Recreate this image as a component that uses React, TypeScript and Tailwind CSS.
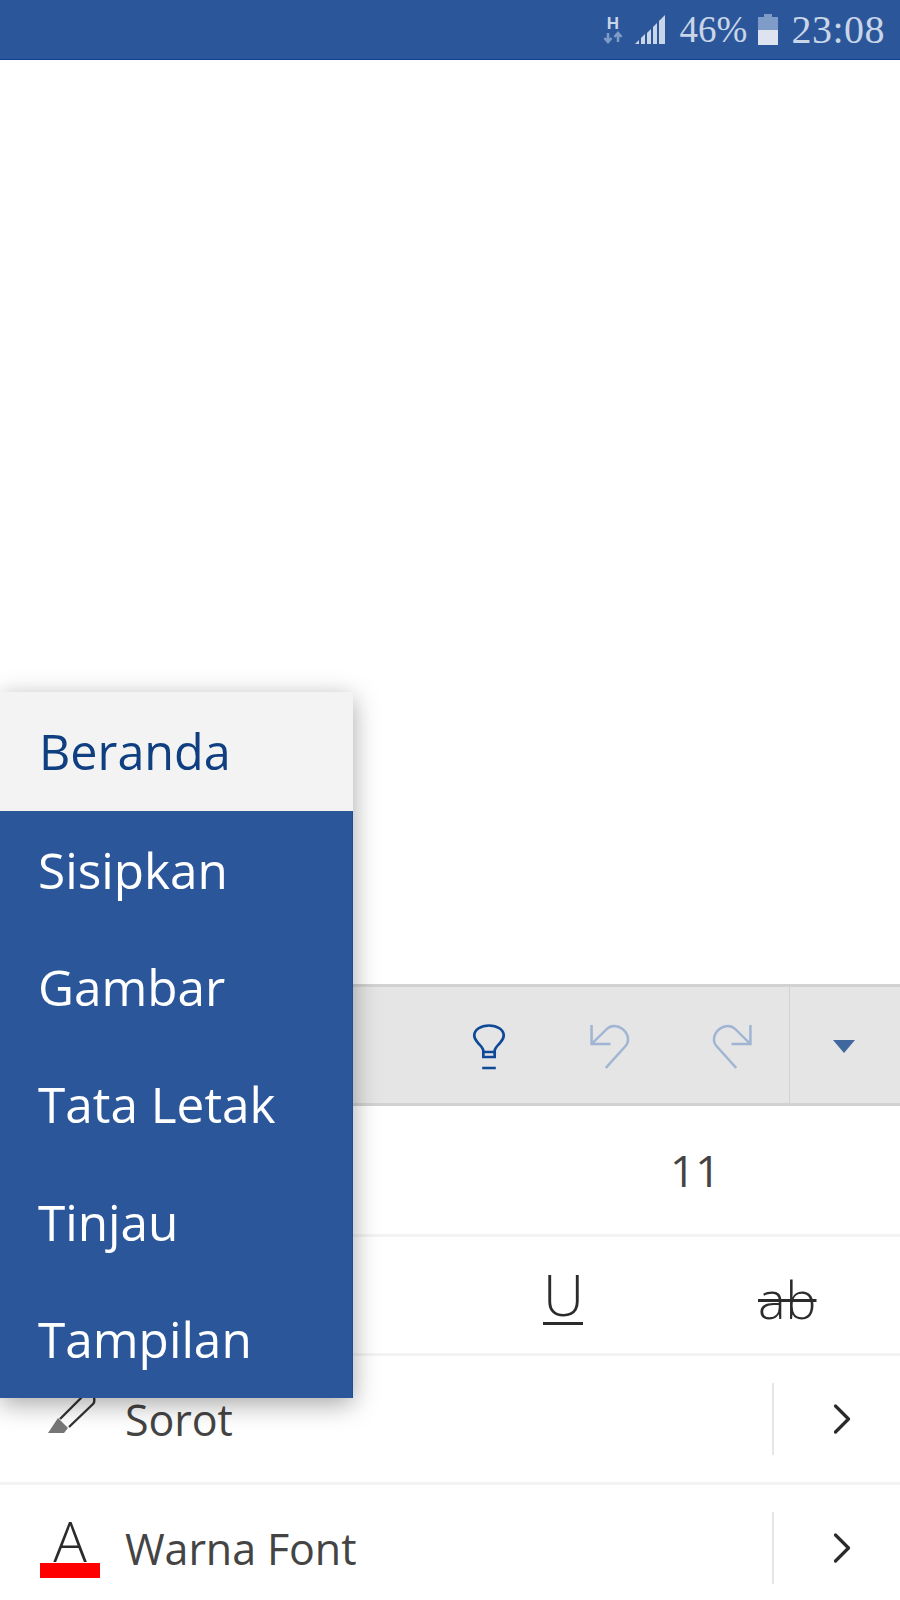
import { ChevronRight } from 'lucide-react';

const menuItems = ['Sisipkan', 'Gambar', 'Tata Letak', 'Tinjau', 'Tampilan'];

function StatusBar() {
  return (
    <div className="h-[60px] shrink-0 bg-[#2b579a] border-b border-[#103f91] flex items-center justify-end pr-[15px] font-['Liberation_Serif',serif] text-[#c9d5e8]">
      <svg width="20" height="32" viewBox="0 0 20 32" className="mr-[12px]">
        <text x="10" y="15" textAnchor="middle" fontSize="17" fontWeight="bold" fontFamily="Liberation Sans, sans-serif" fill="#c9d5e8">H</text>
        <path d="M5 19v8M1.500 24l3.500 4 3.500-4" stroke="#7f9cc8" strokeWidth="2.500" fill="none" />
        <path d="M15 28v-8M11.500 23l3.500-4 3.500 4" stroke="#7f9cc8" strokeWidth="2.500" fill="none" />
      </svg>
      <svg width="31" height="31" viewBox="0 0 31 31" className="mr-[14px]" fill="#c9d5e8">
        <path d="M0 30h4v-4z" />
        <path d="M6 30h4v-10l-4 4z" />
        <path d="M12 30h4V15l-4 4z" />
        <path d="M18 30h4V9l-4 4z" />
        <path d="M24 30h6V1l-6 6z" />
      </svg>
      <span className="text-[37px] leading-none mr-[11px]">46%</span>
      <svg width="20" height="31" viewBox="0 0 20 31" className="mr-[13px]">
        <path d="M6 0h8v3h6v13H0V3h6z" fill="#7f9cc8" />
        <rect y="16" width="20" height="15" fill="#dde4f0" />
      </svg>
      <span className="text-[40px] leading-none tracking-[0.5px]">23:08</span>
    </div>
  );
}

function Toolbar() {
  return (
    <div className="h-[122px] shrink-0 bg-[#e5e5e5] border-y-[3px] border-[#d2d2d2] flex items-center">
      <svg width="34" height="46" viewBox="0 0 30 46" preserveAspectRatio="none" className="ml-[472px] mt-[3px]" fill="none" stroke="#0f4a97" strokeWidth="2.4">
        <path d="M10 33v-6c0-3-2.500-5-5-8.500C3 16 2 14 2 11.500 2 5.500 8 1.500 15 1.500s13 4 13 10c0 2.500-1 4.500-3 7-2.500 3.500-5 5.500-5 8.500v6z" />
        <path d="M10 28h10M9 44h12" />
      </svg>
      <svg width="42" height="46" viewBox="0 0 40 46" preserveAspectRatio="none" className="ml-[84px] mt-[3px]" fill="none" stroke="#a0b5d3" strokeWidth="2.4">
        <path d="M1.500 1v19h18M1.500 20L16 5c4-4 10-4 15 0 6 5 7 13 2 18L15 44" />
      </svg>
      <svg width="42" height="46" viewBox="0 0 40 46" preserveAspectRatio="none" className="ml-[78px] mt-[3px]" fill="none" stroke="#a0b5d3" strokeWidth="2.4">
        <path d="M38.500 1v19h-18M38.500 20L24 5c-4-4-10-4-15 0-6 5-7 13-2 18l18 21" />
      </svg>
      <div className="w-px h-full bg-[#d2d2d2] ml-[37px]" />
      <svg width="22" height="13" viewBox="0 0 22 13" className="ml-[43px] mt-[2px]" fill="#40689f">
        <path d="M0 0h22L11 13z" />
      </svg>
    </div>
  );
}

function OptionRow({ icon, label }: { icon: React.ReactNode; label: string }) {
  return (
    <div className="h-[129px] shrink-0 border-b-[3px] border-[#f3f3f3] last:border-b-0 flex items-center">
      <div className="w-[125px] h-full flex items-center relative">{icon}</div>
      <span className="flex-1 pt-[2px] text-[43px] tracking-[-0.1px] text-[#444444]">{label}</span>
      <div className="w-[2px] h-[72px] bg-[#e6e6e6]" />
      <div className="w-[126px] flex justify-center pl-[9px]">
        <ChevronRight size={52} strokeWidth={1.5} color="#2b2b2b" />
      </div>
    </div>
  );
}

export default function App() {
  return (
    <div className="relative w-[900px] h-[1600px] overflow-hidden bg-white flex flex-col font-['Open_Sans',sans-serif]">
      <StatusBar />
      <div className="h-[924px] shrink-0" />
      <Toolbar />

      <div className="h-[131px] shrink-0 border-b-[3px] border-[#f3f3f3] flex items-center">
        <span className="ml-[670px] text-[44px] text-[#444444]">11</span>
      </div>
      <div className="h-[119px] shrink-0 border-b-[3px] border-[#f3f3f3] flex items-center text-[#2b2b2b] font-light">
        <span className="ml-[543px] w-[40px] text-center text-[57px] leading-[56px] border-b-[3px] border-[#2b2b2b]">U</span>
        <span className="ml-[173px] px-[2px] mt-[8px] text-[52px] leading-none line-through decoration-[3px]">ab</span>
      </div>
      <OptionRow
        label="Sorot"
        icon={
          <svg width="50" height="40" viewBox="0 0 50 40" className="absolute left-[47px] top-[40px]">
            <path d="M13 23L35 1M22 31L46 8Q48 6 47 1" fill="none" stroke="#333333" strokeWidth="2.400" />
            <path d="M1 37l10-15 10 10-4 5z" fill="#777777" />
          </svg>
        }
      />
      <OptionRow
        label="Warna Font"
        icon={
          <div className="absolute left-[40px] top-[33px] w-[60px] flex flex-col items-center">
            <span className="text-[56px] leading-[44px] font-light text-[#2b2b2b]">A</span>
            <div className="w-[60px] h-[15px] bg-[#ff0000] mt-[1px]" />
          </div>
        }
      />

      <div className="absolute left-0 top-[692px] w-[353px] shadow-[0_6px_24px_rgba(0,0,0,0.35)]">
        <div className="h-[119px] bg-[#f3f3f3] flex items-center pl-[39px] text-[48.500px] text-[#0f3f80]">Beranda</div>
        <div className="bg-[#2b579a] border-r border-[#1a4fa0]">
          {menuItems.map((item) => (
            <div key={item} className="h-[117.400px] flex items-center pl-[38px] text-[49.500px] text-white">
              {item}
            </div>
          ))}
        </div>
      </div>
    </div>
  );
}
